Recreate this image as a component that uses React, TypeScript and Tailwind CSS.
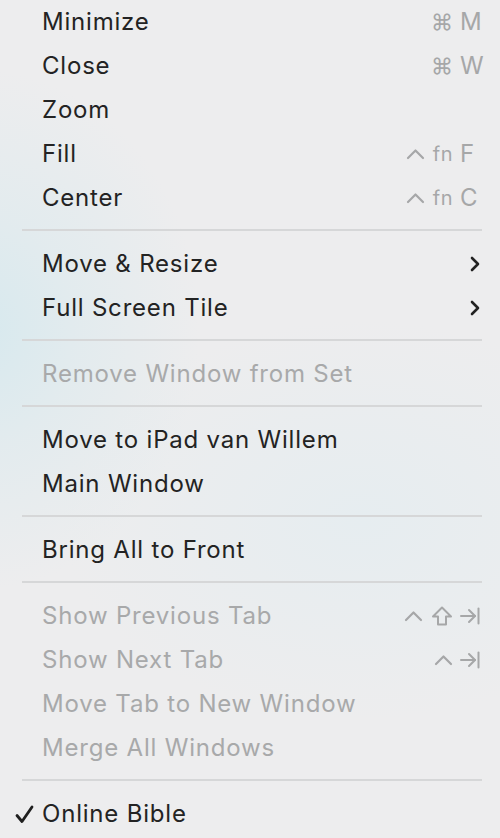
import React from 'react';

type Item =
  | { sep: true }
  | {
      sep?: false;
      label: string;
      disabled?: boolean;
      checked?: boolean;
      submenu?: boolean;
      mods?: ('cmd' | 'ctrl' | 'fn' | 'shift' | 'tab')[];
      keyChar?: string;
    };

const items: Item[] = [
  { label: 'Minimize', mods: ['cmd'], keyChar: 'M' },
  { label: 'Close', mods: ['cmd'], keyChar: 'W' },
  { label: 'Zoom' },
  { label: 'Fill', mods: ['ctrl', 'fn'], keyChar: 'F' },
  { label: 'Center', mods: ['ctrl', 'fn'], keyChar: 'C' },
  { sep: true },
  { label: 'Move & Resize', submenu: true },
  { label: 'Full Screen Tile', submenu: true },
  { sep: true },
  { label: 'Remove Window from Set', disabled: true },
  { sep: true },
  { label: 'Move to iPad van Willem' },
  { label: 'Main Window' },
  { sep: true },
  { label: 'Bring All to Front' },
  { sep: true },
  { label: 'Show Previous Tab', disabled: true, mods: ['ctrl', 'shift'], keyChar: 'tab' },
  { label: 'Show Next Tab', disabled: true, mods: ['ctrl'], keyChar: 'tab' },
  { label: 'Move Tab to New Window', disabled: true },
  { label: 'Merge All Windows', disabled: true },
  { sep: true },
  { label: 'Online Bible', checked: true },
];

const Caret = () => (
  <svg width="19" height="12" viewBox="0 0 19 12" fill="none" stroke="currentColor" strokeWidth="2.2" strokeLinecap="round" strokeLinejoin="round">
    <path d="M2 10 L9.5 2.5 L17 10" />
  </svg>
);

const Shift = () => (
  <svg width="22" height="20" viewBox="0 0 22 20" fill="none" stroke="currentColor" strokeWidth="2" strokeLinejoin="round">
    <path d="M11 1.5 L20 10.5 H15 V18.5 H7 V10.5 H2 Z" />
  </svg>
);

const TabKey = () => (
  <svg width="20" height="18" viewBox="0 0 20 18" fill="none" stroke="currentColor" strokeWidth="2" strokeLinecap="round" strokeLinejoin="round">
    <path d="M1 9 H15" />
    <path d="M9 3 L15 9 L9 15" />
    <path d="M18.5 1.5 V16.5" />
  </svg>
);

const Chevron = () => (
  <svg width="10" height="16" viewBox="0 0 10 16" fill="none" stroke="#222" strokeWidth="2.6" strokeLinecap="round" strokeLinejoin="round">
    <path d="M2 2 L8 8 L2 14" />
  </svg>
);

const Check = () => (
  <svg width="19" height="19" viewBox="0 0 19 19" fill="none" stroke="#1f1f1f" strokeWidth="2.8" strokeLinecap="round" strokeLinejoin="round">
    <path d="M2 10.5 L7 16.5 L17 2" />
  </svg>
);

function Mod({ m }: { m: string }) {
  if (m === 'cmd') return <span className="text-[22px] leading-none">⌘</span>;
  if (m === 'ctrl') return <Caret />;
  if (m === 'shift') return <Shift />;
  if (m === 'fn') return <span className="text-[20px] leading-none tracking-[0.5px]">fn</span>;
  return null;
}

export default function App() {
  return (
    <div
      className="w-[500px] h-[838px] overflow-hidden text-[#232323]"
      style={{
        fontFamily: 'Inter, "Noto Sans", sans-serif',
        background:
          'radial-gradient(ellipse 220px 260px at -20px 330px, #d7e9ee 0%, rgba(220,234,238,0.6) 45%, rgba(236,236,237,0) 100%), radial-gradient(ellipse 300px 200px at 360px 520px, #e6edf0 0%, rgba(236,236,237,0) 100%), #ededee',
      }}
    >
      <div className="-mt-px flex flex-col">
        {items.map((it, i) =>
          it.sep ? (
            <div key={i} className="h-[22px] flex items-center pl-[22px] pr-[18px]">
              <div className="h-[2px] w-full bg-[#d6d7d8]" />
            </div>
          ) : (
            <div
              key={i}
              className={`h-[44px] flex items-center pt-[2px] pl-[15px] pr-[14px] text-[24px] ${
                it.disabled ? 'text-[#a8a9aa]' : 'text-[#232323]'
              }`}
            >
              <div className="w-[27px] flex items-center">{it.checked && <Check />}</div>
              <div className="flex-1 tracking-[0.8px]">{it.label}</div>
              {it.submenu && (
                <div className="w-[26px] flex justify-end pr-[6px]">
                  <Chevron />
                </div>
              )}
              {it.mods && (
                <div className="flex items-center text-[#a6a7a8]">
                  <div className="flex items-center gap-[8px]">
                    {it.mods.map((m) => (
                      <Mod key={m} m={m} />
                    ))}
                  </div>
                  <div className="w-[26px] ml-[7px] flex items-center">
                    {it.keyChar === 'tab' ? <TabKey /> : <span className="text-[24px] leading-none">{it.keyChar}</span>}
                  </div>
                </div>
              )}
            </div>
          )
        )}
      </div>
    </div>
  );
}
